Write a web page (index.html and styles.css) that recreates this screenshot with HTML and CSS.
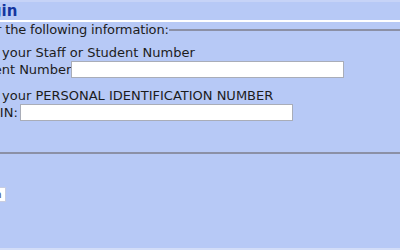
FILE: index.html
```html
<!DOCTYPE html>
<html>
<head>
<meta charset="utf-8">
<link rel="stylesheet" href="styles.css">
</head>
<body>
<div class="page">
  <div class="topline"></div>
  <h1 class="title">Login</h1>
  <div class="divider"></div>
  <form class="login-form">
    <fieldset class="box">
      <legend class="box-legend">Please enter the following information:</legend>
      <p class="prompt">Enter your Staff or Student Number</p>
      <p class="field field-id"><label class="label">Staff or Student Number</label><input class="input" type="text"></p>
      <p class="prompt">Enter your PERSONAL IDENTIFICATION NUMBER</p>
      <p class="field field-pin"><label class="label label-pin">PIN:</label><input class="input" type="password"></p>
    </fieldset>
    <div class="actions"><button class="btn" type="button">Login</button></div>
  </form>
  <div class="bottomline"></div>
</div>
</body>
</html>
```
FILE: styles.css
```css
html, body {
  margin: 0;
  padding: 0;
}
body {
  width: 400px;
  height: 250px;
  overflow: hidden;
  background: #b7c9f6;
  font-family: "DejaVu Sans", Verdana, sans-serif;
  font-size: 13px;
  color: #1c1c1c;
}
.page {
  height: 250px;
  display: flex;
  flex-direction: column;
}
.topline {
  height: 2px;
  background: #c6d3f7;
}
.title {
  margin: 0 0 0 -29px;
  height: 18px;
  line-height: 18px;
  font-size: 15px;
  font-weight: bold;
  color: #1536a0;
}
.divider {
  height: 2px;
  background: #ffffff;
}
.login-form {
  margin: 0;
}
.box {
  margin: 0 -20px 0 -120px;
  padding: 8px 0 21px 0;
  border: 2px solid #8b90a6;
}
.box-legend {
  margin-left: 38px;
  padding: 0 0 0 2px;
  line-height: 15px;
  letter-spacing: -0.15px;
}
.prompt {
  margin: 0 0 0 81px;
  line-height: 16px;
}
.field {
  margin: 0 0 10px 0;
  display: flex;
  align-items: center;
  height: 17px;
}
.field-id { margin-left: 30px; }
.field-pin { margin-left: 110px; }
.label {
  line-height: 16px;
}
.label-pin {
  margin-right: 2px;
}
.input {
  width: 273px;
  height: 17px;
  box-sizing: border-box;
  margin: 0;
  border: 1px solid #a9adb8;
  background: #ffffff;
  padding: 0 2px;
}
.actions {
  margin-top: 33px;
  display: flex;
}
.btn {
  margin-left: -32px;
  height: 15px;
  padding: 0 3px;
  font-family: "DejaVu Sans", Verdana, sans-serif;
  font-size: 11px;
  background: #ffffff;
  border: 1px solid #c8cde0;
  color: #3a5a8a;
  line-height: 13px;
}
.bottomline {
  margin-top: auto;
  height: 2px;
  background: #d3ddf8;
}
```
